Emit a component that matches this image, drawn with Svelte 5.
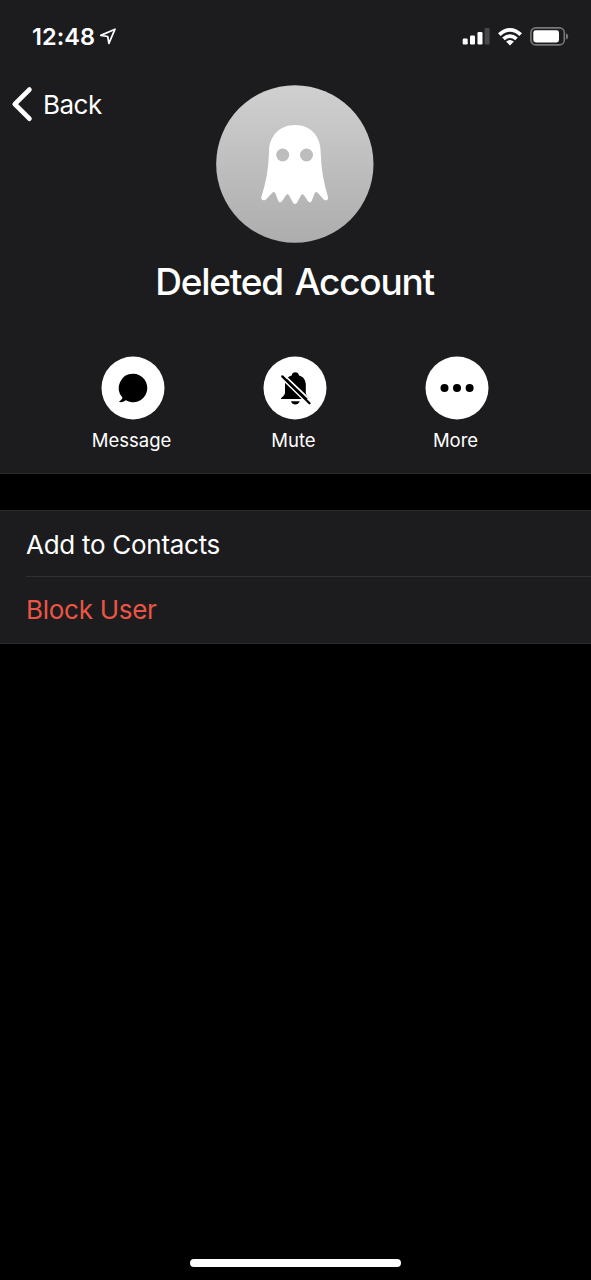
<script lang="ts">
  let { name = 'Deleted Account', time = '12:48' } = $props();

  let muted = $state(true);
  const actions = [
    { id: 'message', label: 'Message' },
    { id: 'mute', label: 'Mute' },
    { id: 'more', label: 'More' }
  ];

  function handleAction(id: string) {
    if (id === 'mute') muted = !muted;
  }
</script>

<div class="screen">
  <header class="profile">
    <div class="status-bar">
      <div class="clock">
        <span class="time">{time}</span>
        <svg class="location" viewBox="0 0 18 18">
          <path d="M1.8 7.4 16 1.2 9.9 15.4 8.7 8.5Z" />
        </svg>
      </div>
      <div class="indicators">
        <svg class="signal" viewBox="0 0 28 18">
          <rect x=".7" y="10.5" width="5" height="6" rx="1.2" />
          <rect x="8" y="7.5" width="5" height="9" rx="1.2" />
          <rect x="15.5" y="4" width="5" height="12.5" rx="1.2" />
          <rect class="dim" x="22.6" y="0" width="5" height="16.5" rx="1.2" />
        </svg>
        <svg class="wifi" viewBox="0 0 24 18">
          <path d="M0 5.2Q12-5.2 24 5.2L21.3 8Q12-.3 2.7 8Z" />
          <path d="M4.2 9.6Q12 2.7 19.8 9.6L17.2 12.2Q12 7.8 6.8 12.2Z" />
          <path d="M8.1 13.5Q12 10.3 15.9 13.5L12 17.5Z" />
        </svg>
        <svg class="battery" viewBox="0 0 39 19">
          <rect class="shell" x=".9" y=".9" width="33.4" height="17" rx="4.8" />
          <rect x="3.3" y="3.3" width="25.7" height="12.2" rx="2.4" />
          <path class="cap" d="M36 6.3Q38.2 7.2 38.2 9.4T36 12.5Z" />
        </svg>
      </div>
    </div>

    <div class="nav">
      <button class="back">
        <svg viewBox="0 0 22 36">
          <path d="M18.4 3.6 3.8 18.1 18.4 32.6" />
        </svg>
        <span>Back</span>
      </button>
      <svg class="avatar" viewBox="18 14 474 474">
        <defs>
          <linearGradient id="avatar-fill" x1="0" y1="0" x2="0" y2="1">
            <stop offset="0" stop-color="#d0d0d0" />
            <stop offset="1" stop-color="#adadad" />
          </linearGradient>
        </defs>
        <circle cx="254.5" cy="251" r="236" fill="url(#avatar-fill)" />
        <path
          fill="#fff"
          d="M255 134C209 134 177 167 177 215C176 263 168 308 154 350C152 358 160 363 167 358L187 337Q192 332 196 339L205 362Q209 370 216 363L228 345Q232 338 237 345L249 367Q255 375 261 367L273 345Q277 338 282 345L294 363Q301 370 305 362L314 339Q318 332 323 337L342 358C349 363 356 358 354 350C341 308 333 263 332 215C332 167 301 134 255 134Z"
        />
        <circle cx="218" cy="224" r="19.5" fill="#bdbdbd" />
        <circle cx="289.5" cy="224" r="19.5" fill="#bdbdbd" />
      </svg>
    </div>

    <h1>{name}</h1>

    <div class="actions">
      {#each actions as action}
        <button class="action" onclick={() => handleAction(action.id)}>
          <svg viewBox="0 0 64 64">
            <circle cx="32" cy="32" r="31.5" fill="#fff" />
            {#if action.id === 'message'}
              <path d="M32 17.8a14.2 14.2 0 1 1-7.2 26.4C22.9 45.6 20.7 46.4 18.6 46.1 18.1 46 18.1 45.4 18.5 45.2 20.5 44 21.5 42.6 21.4 41.5A14.2 14.2 0 0 1 32 17.8Z" />
            {:else if action.id === 'mute'}
              <path d="M17.9 43.1C18.1 41.2 21.8 40 22 36.8V28.8C22 23.7 24.5 20.5 28.7 19.4 29.1 15.3 35.5 15.3 36 19.4 40.2 20.5 42.8 23.7 42.8 28.8V36.8C43 40 46.5 41.2 46.8 43.1Z" />
              <path d="M27.9 45.2H36.7Q35.3 48.4 32.3 48.4T27.9 45.2Z" />
              {#if muted}
                <path class="slash-gap" d="M18.2 21.9 46 48.8M20.7 18.7 48.4 45.2" />
                <path class="slash" d="M19.3 20.4 46.5 47.2" />
              {/if}
            {:else}
              <circle cx="19.5" cy="32" r="4" />
              <circle cx="32" cy="32" r="4" />
              <circle cx="44.6" cy="32" r="4" />
            {/if}
          </svg>
          <span>{action.label}</span>
        </button>
      {/each}
    </div>
  </header>

  <section class="options">
    <button class="option">Add to Contacts</button>
    <button class="option danger">Block User</button>
  </section>

  <footer><div class="home-indicator"></div></footer>
</div>

<style>
  :global(body) { background: #000; }
  .screen {
    height: 1280px; display: flex; flex-direction: column; background: #000;
    color: #fff; font-family: Inter, "Liberation Sans", sans-serif; overflow: hidden;
  }
  svg { display: block; flex: none; }
  button { margin: 0; padding: 0; border: 0; background: none; color: inherit; font: inherit; cursor: pointer; }

  .profile { box-sizing: border-box; height: 474px; background: #1c1c1e; border-bottom: 1px solid #2b2b2d; }

  .status-bar { height: 73px; box-sizing: border-box; padding: 0 22px 0 32px; display: flex; align-items: center; justify-content: space-between; }
  .clock { display: flex; align-items: center; gap: 4px; }
  .time { font-size: 23.5px; font-weight: 600; letter-spacing: 0.1px; }
  .location { width: 18px; height: 18px; }
  .location path { fill: none; stroke: #fff; stroke-width: 1.7; stroke-linejoin: round; }
  .indicators { display: flex; align-items: center; gap: 8px; fill: #fff; }
  .signal { width: 28px; height: 18px; }
  .signal .dim { fill: #48484a; }
  .wifi { width: 24px; height: 18px; }
  .battery { width: 39px; height: 19px; }
  .battery .shell { fill: none; stroke: #77777a; stroke-width: 1.6; }
  .battery .cap { fill: #77777a; }

  .nav { display: grid; grid-template-columns: 216px 158px 1fr; padding-top: 12px; }
  .back { height: 38px; padding-left: 11px; display: flex; align-items: center; align-self: start; gap: 10px; font-size: 26px; letter-spacing: -0.5px; }
  .back svg { width: 22px; height: 36px; }
  .back path { fill: none; stroke: #fff; stroke-width: 4.8; stroke-linecap: round; stroke-linejoin: round; }
  .avatar { width: 158px; height: 158px; }

  h1 { margin: 16px 0 0; line-height: 46px; padding-right: 2px; text-align: center; font-size: 37px; font-weight: 500; letter-spacing: -1.25px; word-spacing: 3px; white-space: nowrap; }

  .actions { margin-top: 51px; padding-left: 52px; display: grid; grid-template-columns: repeat(3, 162px); }
  .action { display: flex; flex-direction: column; align-items: center; gap: 8px; font-size: 18.5px; line-height: 24px; letter-spacing: 0; }
  .action svg { width: 64px; height: 64px; }
  .action span { margin-right: 3px; }
  .slash { fill: none; stroke: #000; stroke-width: 2.3; stroke-linecap: round; }
  .slash-gap { fill: none; stroke: #fff; stroke-width: 1.8; }

  .options { margin-top: 36px; background: #1c1c1e; border-top: 1px solid #2b2b2d; border-bottom: 1px solid #2b2b2d; padding-left: 26px; }
  .option { display: block; box-sizing: border-box; width: 100%; height: 65px; padding-top: 1px; text-align: left; font-size: 26px; letter-spacing: -0.28px; }
  .option + .option { height: 67px; padding: 0 0 1px; border-top: 1px solid #303032; }
  .danger { color: #eb5545; }

  footer { margin-top: auto; padding-bottom: 13px; display: flex; justify-content: center; }
  .home-indicator { width: 211px; height: 8px; border-radius: 4px; background: #fff; }
</style>
